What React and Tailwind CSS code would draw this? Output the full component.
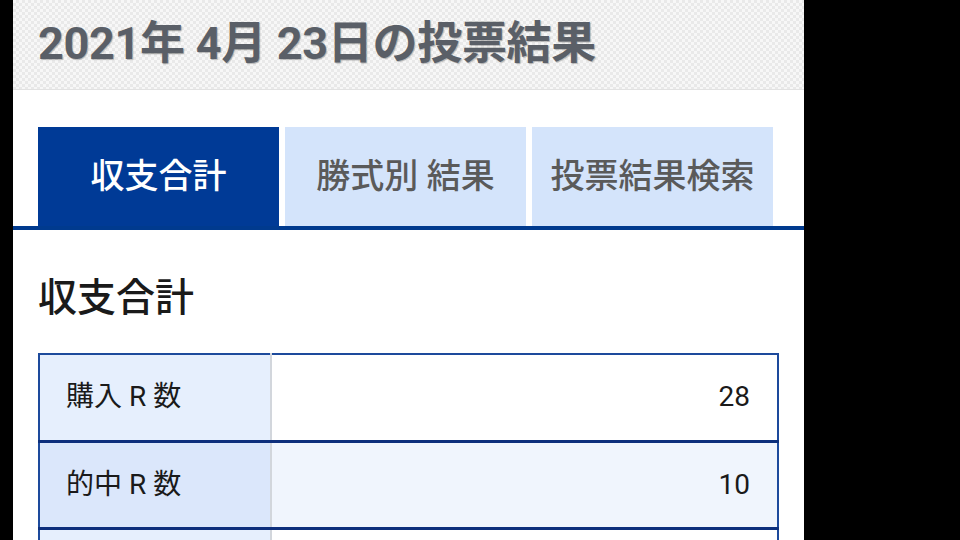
const tabs = [
  { label: "収支合計", active: true },
  { label: "勝式別 結果", active: false },
  { label: "投票結果検索", active: false },
];

const rows = [
  { label: "購入 R 数", value: "28", head: "bg-[#e6effd]", cell: "bg-white" },
  { label: "的中 R 数", value: "10", head: "bg-[#dbe7fb]", cell: "bg-[#f0f5fd]" },
  { label: "", value: "", head: "bg-[#e6effd]", cell: "bg-white" },
];

export default function App() {
  return (
    <div className="flex h-[540px] overflow-hidden bg-black font-['Roboto','Noto_Sans_CJK_JP',sans-serif]">
      <div className="ml-[13px] w-[791px] shrink-0 bg-white">
        <header className="h-[90px] border-b border-[#e2e2e2] bg-[repeating-conic-gradient(#e9e9e9_0_25%,#f7f7f7_0_50%)] bg-[length:6px_6px] px-[25px] pt-[14px]">
          <h1 className="text-[45px] font-bold leading-[60px] tracking-[-0.3px] text-[#5a5f67] [text-shadow:1px_1px_1px_rgba(0,0,0,0.25)]">
            2021年 4月 23日の投票結果
          </h1>
        </header>

        <nav className="mt-[37px] flex gap-[6px] border-b-[4px] border-[#003a8e] pl-[25px]">
          {tabs.map((tab) => (
            <div
              key={tab.label}
              className={`flex h-[99px] w-[241px] items-center justify-center text-[34px] font-medium ${
                tab.active ? "bg-[#003a96] text-white" : "bg-[#d4e4fb] text-[#5a5a5a]"
              }`}
            >
              {tab.label}
            </div>
          ))}
        </nav>

        <section className="px-[25px] pt-[40px]">
          <h2 className="text-[39px] font-medium leading-[56px] text-[#1a1a1a]">収支合計</h2>

          <table className="mt-[27px] w-[741px] border-collapse border-2 border-[#1d4a9c] text-[28px] text-[#1a1a1a]">
            <tbody>
              {rows.map((row, i) => (
                <tr key={i} className="h-[87px] border-b-[3px] border-[#0d2f7c]">
                  <th className={`w-[232px] border-r-2 border-[#d2d6dc] pl-[26px] text-left font-normal ${row.head}`}>
                    {row.label}
                  </th>
                  <td className={`pr-[27px] text-right ${row.cell}`}>{row.value}</td>
                </tr>
              ))}
            </tbody>
          </table>
        </section>
      </div>
    </div>
  );
}
